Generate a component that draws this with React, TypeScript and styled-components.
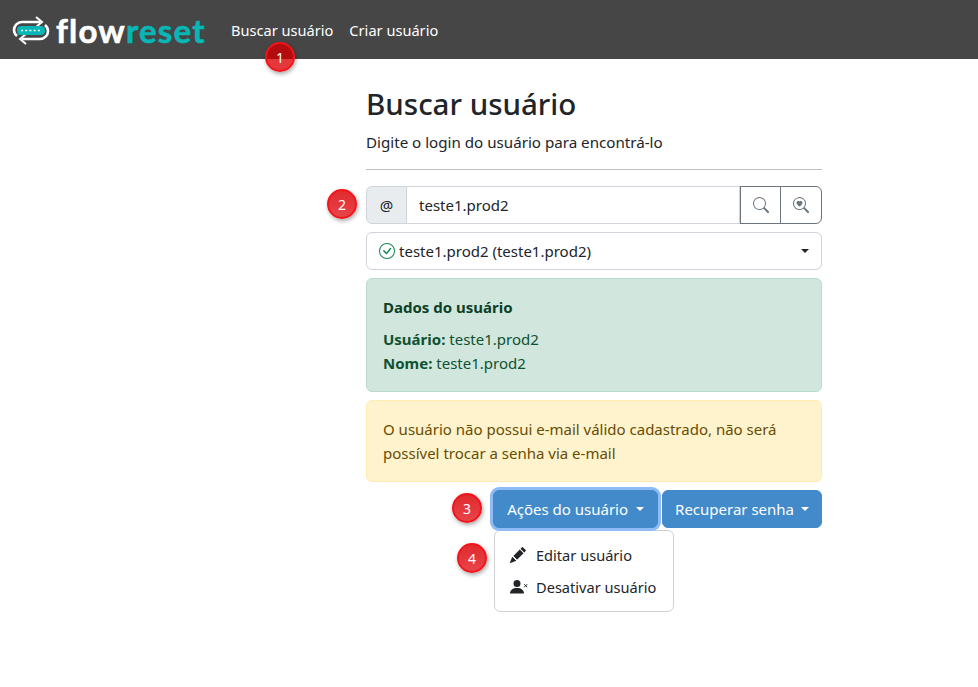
import React from "react";
import styled, { createGlobalStyle } from "styled-components";
import { BsPencilFill, BsCheckCircle, BsSearch, BsSearchHeart } from "react-icons/bs";

const GlobalStyle = createGlobalStyle`
    html, body {
        margin: 0;
        background: #fff;
        font-family: "Noto Sans", "Open Sans", sans-serif;
        font-size: 15px;
        color: #212529;
    }
`;

const Navbar = styled.nav`
    height: 59px;
    background: #464646;
    display: flex;
    align-items: center;
    padding-left: 11px;
    box-sizing: border-box;
`;

const Brand = styled.div`
    width: 195px;
    display: flex;
    align-items: center;
    gap: 5px;
`;

const Wordmark = styled.span`
    font-family: "Lato", sans-serif;
    font-size: 33px;
    line-height: 34px;
    font-weight: 700;
    letter-spacing: 1.2px;
    color: #fff;
    -webkit-text-stroke: 0.6px currentColor;
`;

const WordmarkAccent = styled.span`
    color: #08b6b5;
`;

const NavLinks = styled.div`
    display: flex;
    gap: 16px;
    margin-left: 25px;
`;

const NavLink = styled.a`
    color: #fff;
    font-size: 14.6px;
`;

const Main = styled.main`
    width: 456px;
    margin-left: 366px;
    padding-top: 26px;
`;

const Title = styled.h1`
    margin: 0;
    font-size: 29.5px;
    line-height: 38px;
    font-weight: 500;
`;

const Subtitle = styled.p`
    margin: 7px 0 0;
    font-size: 15.15px;
    line-height: 24px;
`;

const Rule = styled.hr`
    margin: 15px 0 16px;
    border: 0;
    border-top: 1px solid #bdbfc1;
`;

const InputGroup = styled.div`
    display: flex;
    height: 38px;
    box-sizing: border-box;
`;

const InputAddon = styled.span`
    width: 41px;
    box-sizing: border-box;
    background: #e9ecef;
    border: 1px solid #ced4da;
    border-radius: 6px 0 0 6px;
    display: flex;
    align-items: center;
    justify-content: center;
    font-size: 15px;
`;

const Input = styled.div`
    flex: 1;
    border: 1px solid #ced4da;
    border-left: 0;
    display: flex;
    align-items: center;
    padding-left: 12px;
    font-size: 15px;
`;

const IconButton = styled.button<{ $last?: boolean }>`
    width: ${(p) => (p.$last ? "42px" : "41px")};
    margin-left: ${(p) => (p.$last ? "-1px" : "0")};
    background: #fff;
    border: 1px solid #6c757d;
    border-radius: ${(p) => (p.$last ? "0 6px 6px 0" : "0")};
    color: #6c757d;
    display: flex;
    align-items: center;
    justify-content: center;
    padding: 0;
    font-size: 16px;
`;

const SelectBox = styled.div`
    height: 38px;
    margin-top: 8px;
    box-sizing: border-box;
    border: 1px solid #ced4da;
    border-radius: 6px;
    display: flex;
    align-items: center;
    padding: 0 12px;
    gap: 4px;
    font-size: 15px;
`;

const CheckIcon = styled(BsCheckCircle)`
    color: #198754;
    font-size: 16px;
`;

const Caret = styled.span<{ $light?: boolean }>`
    width: 0;
    height: 0;
    border-top: 4.5px solid ${(p) => (p.$light ? "#fff" : "#212529")};
    border-left: 4.5px solid transparent;
    border-right: 4.5px solid transparent;
`;

const SelectCaret = styled(Caret)`
    margin-left: auto;
`;

const Alert = styled.div<{ $kind: "success" | "warning" }>`
    margin-top: 8px;
    padding: 16px;
    border-radius: 6px;
    border: 1px solid ${(p) => (p.$kind === "success" ? "#badbcc" : "#ffecb5")};
    background: ${(p) => (p.$kind === "success" ? "#d1e7dd" : "#fff3cd")};
    color: ${(p) => (p.$kind === "success" ? "#0f5132" : "#664d03")};
    font-size: 15px;
    line-height: 24px;
`;

const AlertTitle = styled.h5`
    margin: 0 0 8px;
    font-size: 15px;
    line-height: 24px;
    font-weight: 700;
    color: #0c4128;
`;

const Actions = styled.div`
    margin-top: 8px;
    display: flex;
    justify-content: flex-end;
    gap: 4px;
`;

const ActionButton = styled.button<{ $focused?: boolean; $tight?: boolean }>`
    height: 38px;
    box-sizing: border-box;
    background: #428aca;
    color: #fff;
    border: 1px solid #428aca;
    border-radius: 6px;
    padding: ${(p) => (p.$tight ? "0 12px" : "0 13px")};
    display: flex;
    align-items: center;
    gap: ${(p) => (p.$tight ? "7px" : "8px")};
    font-family: inherit;
    font-size: 15px;
    box-shadow: ${(p) => (p.$focused ? "0 0 0 3px #8fbcf7" : "none")};
`;

const DropdownMenu = styled.div`
    width: 180px;
    height: 82px;
    margin: 2px 0 0 128px;
    box-sizing: border-box;
    background: #fff;
    border: 1px solid #d0d1d3;
    border-radius: 6px;
    padding: 8px 0;
`;

const DropdownItem = styled.div`
    height: 32px;
    display: flex;
    align-items: center;
    padding-left: 15px;
    gap: 8px;
    font-size: 14.6px;
    color: #212529;
`;

const ItemIcon = styled.span`
    width: 18px;
    display: flex;
    align-items: center;
    font-size: 16px;
`;

const Marker = styled.span<{ $x: number; $y: number; $onBar?: boolean }>`
    position: absolute;
    left: ${(p) => p.$x}px;
    top: ${(p) => p.$y}px;
    width: 30px;
    height: 30px;
    border-radius: 50%;
    background: ${(p) =>
        p.$onBar ? "linear-gradient(#b40c0e 58%, #e5383b 58%)" : "linear-gradient(#e02a2e, #e8444a)"};
    border: 2px solid #f2141a;
    box-sizing: border-box;
    box-shadow: 1px 2px 4px rgba(0, 0, 0, 0.35);
    color: #fff;
    font-size: 14px;
    display: flex;
    align-items: center;
    justify-content: center;
    z-index: 5;
`;

const LogoIcon = () => (
    <svg width="40" height="30" viewBox="0 0 40 30">
        <path d="M29 7H11a8 8 0 0 0-8 8 8 8 0 0 0 3 6" fill="none" stroke="#fff" strokeWidth="2.6" />
        <path d="M25 2l6 5-6 5" fill="none" stroke="#fff" strokeWidth="2" />
        <path d="M11 24h18a8 8 0 0 0 8-8 8 8 0 0 0-3-6" fill="none" stroke="#fff" strokeWidth="2.6" />
        <path d="M15 19l-6 5 6 5" fill="none" stroke="#fff" strokeWidth="2" />
        <rect x="6" y="11" width="28" height="9" rx="4" fill="#08b6b5" />
        <path d="M10 15.500h20" stroke="#fff" strokeWidth="1.6" strokeDasharray="2 2.200" />
    </svg>
);

const PersonXIcon = () => (
    <svg width="18" height="14" viewBox="0 0 18 14">
        <circle cx="7" cy="3.500" r="3.500" fill="#212529" />
        <path d="M0 13.500c0-3.500 3-5.500 7-5.500s7 2 7 5.500z" fill="#212529" />
        <path d="M14.200 4.200l3 3M17.200 4.200l-3 3" stroke="#212529" strokeWidth="1" />
    </svg>
);

export default function App() {
    return (
        <>
            <GlobalStyle />
            <Navbar>
                <Brand>
                    <LogoIcon />
                    <Wordmark>flow<WordmarkAccent>reset</WordmarkAccent></Wordmark>
                </Brand>
                <NavLinks>
                    <NavLink>Buscar usuário</NavLink>
                    <NavLink>Criar usuário</NavLink>
                </NavLinks>
            </Navbar>
            <Marker $x={265} $y={42} $onBar>1</Marker>
            <Marker $x={327} $y={189}>2</Marker>
            <Marker $x={452} $y={493}>3</Marker>
            <Marker $x={457} $y={543}>4</Marker>
            <Main>
                <Title>Buscar usuário</Title>
                <Subtitle>Digite o login do usuário para encontrá-lo</Subtitle>
                <Rule />
                <InputGroup>
                    <InputAddon>@</InputAddon>
                    <Input>teste1.prod2</Input>
                    <IconButton><BsSearch /></IconButton>
                    <IconButton $last><BsSearchHeart /></IconButton>
                </InputGroup>
                <SelectBox>
                    <CheckIcon />
                    teste1.prod2 (teste1.prod2)
                    <SelectCaret />
                </SelectBox>
                <Alert $kind="success">
                    <AlertTitle>Dados do usuário</AlertTitle>
                    <div><b>Usuário:</b> teste1.prod2</div>
                    <div><b>Nome:</b> teste1.prod2</div>
                </Alert>
                <Alert $kind="warning">
                    O usuário não possui e-mail válido cadastrado, não será possível trocar a senha via e-mail
                </Alert>
                <Actions>
                    <ActionButton $focused>Ações do usuário <Caret $light /></ActionButton>
                    <ActionButton $tight>Recuperar senha <Caret $light /></ActionButton>
                </Actions>
                <DropdownMenu>
                    <DropdownItem><ItemIcon><BsPencilFill /></ItemIcon>Editar usuário</DropdownItem>
                    <DropdownItem><ItemIcon><PersonXIcon /></ItemIcon>Desativar usuário</DropdownItem>
                </DropdownMenu>
            </Main>
        </>
    );
}
